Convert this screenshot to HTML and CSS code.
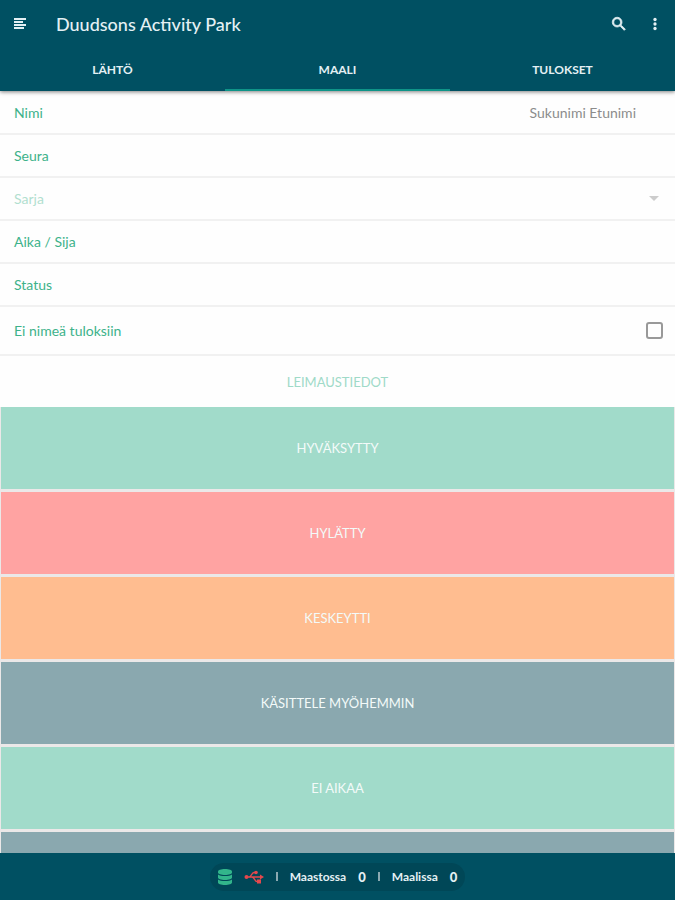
FILE: index.html
```
<!DOCTYPE html>
<html lang="fi">
  <head>
    <meta charset="UTF-8" />
    <meta name="viewport" content="width=device-width, initial-scale=1" />
    <title>Duudsons Activity Park</title>
    <link rel="stylesheet" href="styles.css">
  </head>
  <body>
    <header class="header">
      <div class="toolbar">
        <button type="button" class="icon-button" aria-label="Valikko">
          <svg width="14" height="14" viewBox="0 0 14 14" fill="currentColor">
            <path d="M1 1h12v2H1zM1 4h9v2H1zM1 7h12v2H1zM1 10h10v2H1z" />
          </svg>
        </button>
        <h1>Duudsons Activity Park</h1>
        <button type="button" class="icon-button" aria-label="Haku">
          <svg width="18" height="18" viewBox="0 0 24 24" fill="currentColor" stroke="currentColor" stroke-width="1">
            <path d="M15.5 14h-.79l-.28-.27A6.47 6.47 0 0 0 16 9.5 6.5 6.5 0 1 0 9.5 16c1.61 0 3.09-.59 4.23-1.57l.27.28v.79l5 4.99L20.49 19l-4.99-5zm-6 0C7.01 14 5 11.99 5 9.5S7.01 5 9.5 5 14 7.01 14 9.5 11.99 14 9.5 14z" />
          </svg>
        </button>
        <button type="button" class="icon-button" aria-label="Lisää">
          <svg width="18" height="18" viewBox="0 0 24 24" fill="currentColor">
            <circle cx="12" cy="6" r="2.2" />
            <circle cx="12" cy="12" r="2.2" />
            <circle cx="12" cy="18" r="2.2" />
          </svg>
        </button>
      </div>
      <nav class="tabs">
        <a href="#lahto">LÄHTÖ</a>
        <a href="#maali" class="active">MAALI</a>
        <a href="#tulokset">TULOKSET</a>
      </nav>
    </header>

    <main class="content">
      <form id="formulario">
        <div class="row">
          <label for="nimi">Nimi</label>
          <input type="text" id="nimi" name="nimi" placeholder="Sukunimi Etunimi" />
        </div>
        <div class="row">
          <label for="seura">Seura</label>
          <input type="text" id="seura" name="seura" />
        </div>
        <div class="row disabled">
          <label for="sarja">Sarja</label>
          <select id="sarja" name="sarja" disabled></select>
          <svg class="arrow" width="10" height="5" viewBox="0 0 10 5" fill="currentColor">
            <path d="M0 0h10L5 5z" />
          </svg>
        </div>
        <div class="row">
          <label for="aika">Aika / Sija</label>
          <input type="text" id="aika" name="aika" />
        </div>
        <div class="row">
          <label for="status">Status</label>
          <input type="text" id="status" name="status" />
        </div>
        <div class="row row-check">
          <label for="ei-nimea">Ei nimeä tuloksiin</label>
          <input type="checkbox" id="ei-nimea" name="ei-nimea" />
        </div>

        <button type="button" class="link-button">LEIMAUSTIEDOT</button>

        <div class="actions">
          <button type="button" class="green">HYVÄKSYTTY</button>
          <button type="button" class="red">HYLÄTTY</button>
          <button type="button" class="orange">KESKEYTTI</button>
          <button type="button" class="gray">KÄSITTELE MYÖHEMMIN</button>
          <button type="button" class="green">EI AIKAA</button>
          <button type="button" class="gray" aria-label="Tyhjennä"></button>
        </div>
      </form>
    </main>

    <footer class="footer">
      <div class="status">
        <svg width="14" height="16" viewBox="0 0 14 16" fill="#32b58b">
          <path d="M0 2.5C0 1 3 0 7 0s7 1 7 2.500v1C14 5 11 6 7 6S0 5 0 3.500z" />
          <path d="M0 5.500C1.500 6.700 4 7 7 7s5.500-.3 7-1.500v3C14 10 11 11 7 11S0 10 0 8.500z" />
          <path d="M0 10.500C1.500 11.700 4 12 7 12s5.500-.3 7-1.500v3C14 15 11 16 7 16s-7-1-7-2.500z" />
        </svg>
        <svg width="20" height="14" viewBox="0 0 20 14" fill="none" stroke="#e5484d" stroke-width="1.500">
          <path d="M3 7h14M5 7c2.500 0 2.500-4.500 5-4.500h2M8 7c2.500 0 2.500 4.500 5 4.500h2" />
          <circle cx="2.500" cy="7" r="2" fill="#e5484d" stroke="none" />
          <circle cx="12" cy="2.500" r="1.800" fill="#e5484d" stroke="none" />
          <path d="M13 9.500h4v4h-4zM16 4.500l4 2.500-4 2.500z" fill="#e5484d" stroke="none" />
        </svg>
        <span class="divider"></span>
        <span>Maastossa</span>
        <b>0</b>
        <span class="divider"></span>
        <span>Maalissa</span>
        <b>0</b>
      </div>
    </footer>
  </body>
</html>
```
FILE: styles.css
```
* {
  box-sizing: border-box;
}
body {
  font-family: Lato, "Noto Sans", sans-serif;
  font-size: 14px;
  background-color: #fefefe;
  margin: 0;
  height: 100vh;
  display: flex;
  flex-direction: column;
}
button,
input,
select {
  font-family: inherit;
  font-size: inherit;
  border: none;
  background: none;
  padding: 0;
  margin: 0;
}
button {
  cursor: pointer;
}
.header {
  flex: none;
  background-color: #005062;
  color: #e4f0f4;
  box-shadow: 0 1px 4px rgba(0, 0, 0, 0.5);
  z-index: 1;
}
.toolbar {
  display: flex;
  align-items: center;
  height: 48px;
  padding: 0 2px;
}
h1 {
  flex: 1;
  margin: 0 0 0 18px;
  font-size: 18px;
  font-weight: 500;
}
.icon-button {
  display: flex;
  justify-content: center;
  align-items: center;
  width: 36px;
  height: 36px;
  color: inherit;
}
.tabs {
  display: flex;
}
.tabs a {
  flex: 1;
  height: 43px;
  line-height: 43px;
  text-align: center;
  font-size: 12px;
  font-weight: bold;
  color: inherit;
  text-decoration: none;
}
.tabs .active {
  border-bottom: 2px solid #0f9488;
}
.content {
  flex: 1;
  min-height: 0;
  padding-top: 1px;
  overflow: hidden;
}
.row {
  display: flex;
  align-items: center;
  min-height: 43px;
  padding: 0 14px;
  border-bottom: 2px solid #f1f1f1;
  color: #3db28a;
}
.row input[type="text"] {
  flex: 1;
  min-width: 0;
  padding-right: 25px;
  text-align: right;
  color: #777;
}
.row input::placeholder {
  color: #8c8c8c;
}
.row select {
  flex: 1;
  appearance: none;
}
.disabled label {
  opacity: 0.4;
}
.arrow {
  margin-right: 2px;
  color: #ccc;
}
.row-check {
  min-height: 49px;
  justify-content: space-between;
  padding-right: 12px;
}
.row-check input {
  appearance: none;
  width: 17px;
  height: 17px;
  border: 2px solid #999;
  border-radius: 3px;
}
.link-button {
  display: block;
  width: 100%;
  height: 51px;
  font-size: 13px;
  color: #9fdac8;
}
.actions {
  display: flex;
  flex-direction: column;
  gap: 3px;
  padding: 0 1px;
  background-color: #ebe8e8;
}
.actions button {
  height: 82px;
  font-size: 13px;
  color: #f3faf9;
}
.actions .green {
  background-color: #a1dbca;
}
.actions .red {
  background-color: #ffa3a2;
}
.actions .orange {
  background-color: #ffbd90;
}
.actions .gray {
  background-color: #8aa8af;
}
.footer {
  flex: none;
  display: flex;
  justify-content: center;
  align-items: center;
  height: 47px;
  background-color: #005062;
  z-index: 1;
}
.status {
  display: flex;
  align-items: center;
  gap: 12px;
  padding: 6px 8px;
  border-radius: 14px;
  background-color: #004757;
  color: #e4f0f4;
  font-size: 12px;
  font-weight: bold;
}
.status b {
  font-size: 13px;
}
.divider {
  width: 2px;
  height: 9px;
  background-color: #8ba9b1;
}
```
